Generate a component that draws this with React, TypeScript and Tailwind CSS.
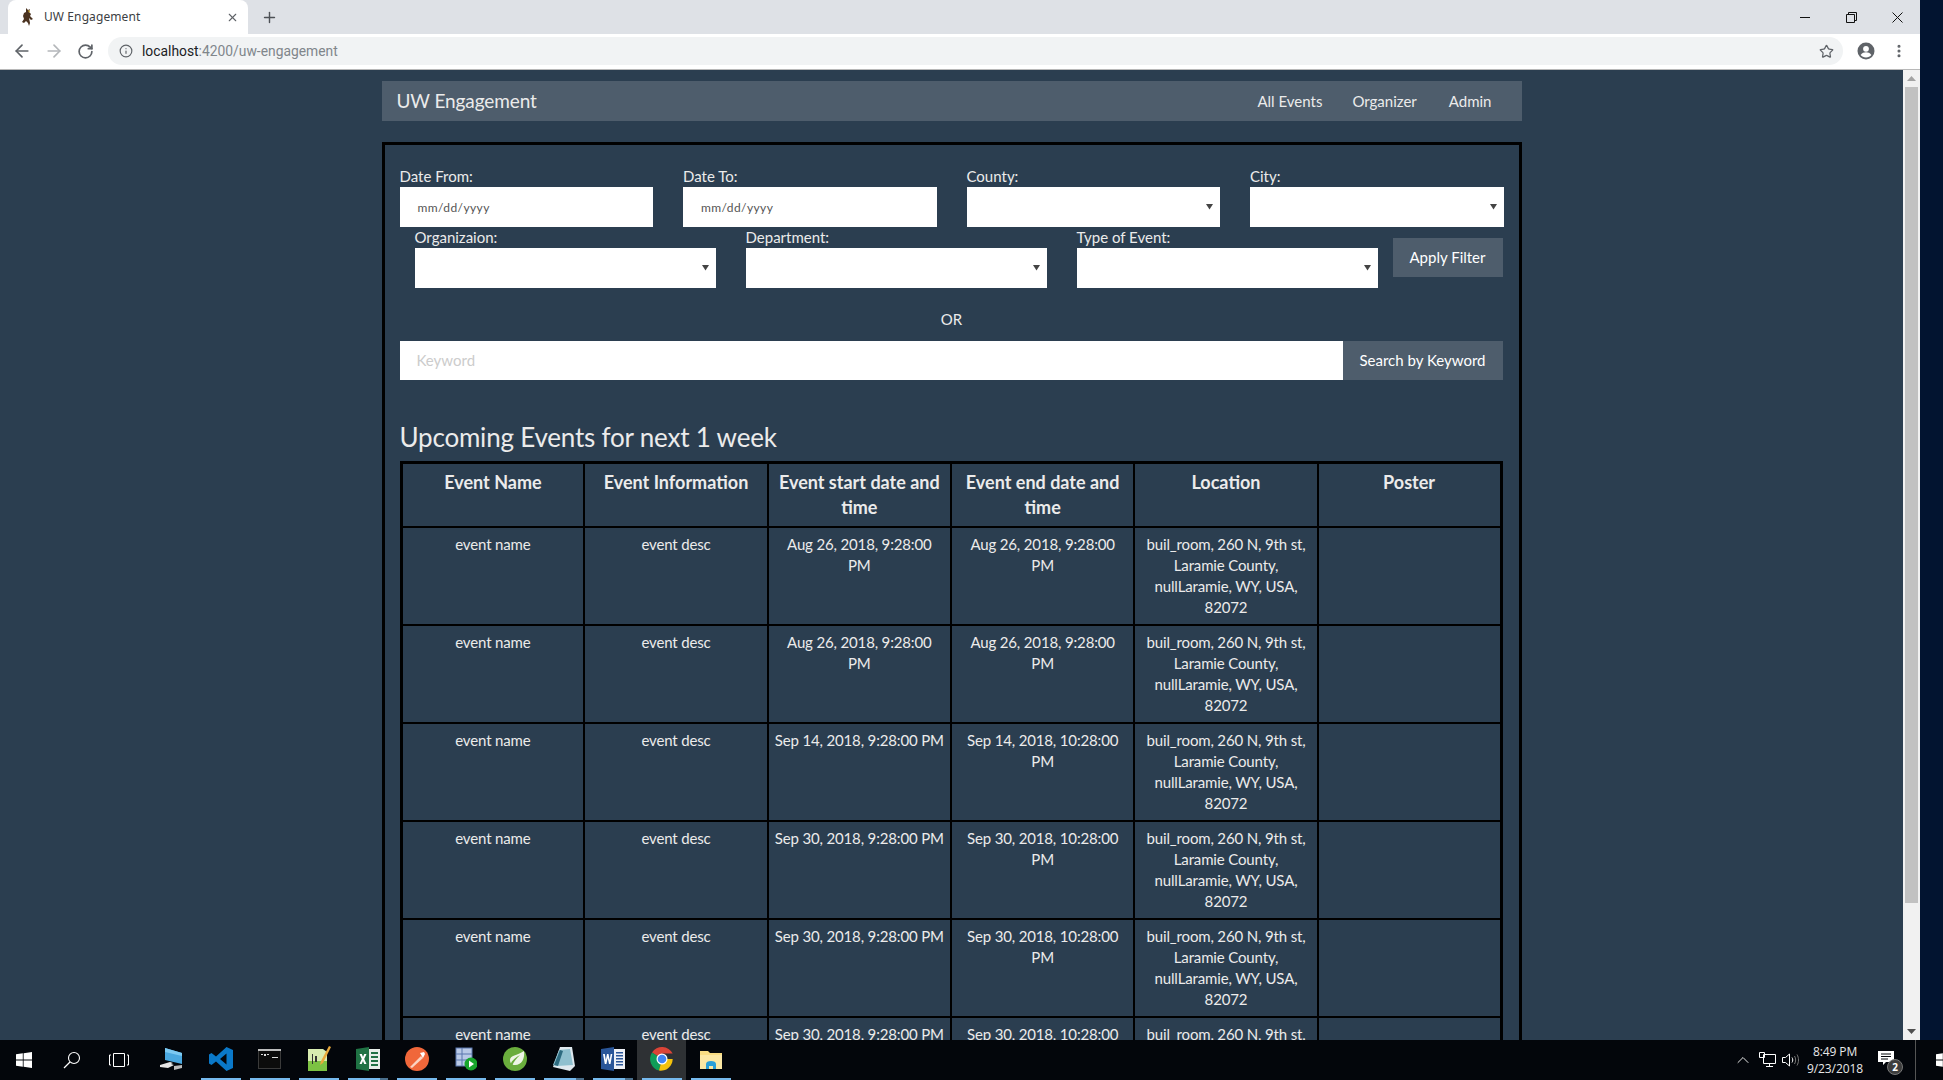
import React from 'react';
import { ArrowLeft, ArrowRight, RotateCw, Info, Star, MoreVertical, X, Plus, ChevronUp } from 'lucide-react';

const headers = ['Event Name', 'Event Information', 'Event start date and\ntime', 'Event end date and\ntime', 'Location', 'Poster'];

const location = 'buil_room, 260 N, 9th st,\nLaramie County,\nnullLaramie, WY, USA,\n82072';

const rows = [
  ['Aug 26, 2018, 9:28:00\nPM', 'Aug 26, 2018, 9:28:00\nPM'],
  ['Aug 26, 2018, 9:28:00\nPM', 'Aug 26, 2018, 9:28:00\nPM'],
  ['Sep 14, 2018, 9:28:00 PM', 'Sep 14, 2018, 10:28:00\nPM'],
  ['Sep 30, 2018, 9:28:00 PM', 'Sep 30, 2018, 10:28:00\nPM'],
  ['Sep 30, 2018, 9:28:00 PM', 'Sep 30, 2018, 10:28:00\nPM'],
  ['Sep 30, 2018, 9:28:00 PM', 'Sep 30, 2018, 10:28:00\nPM'],
];

const Caret = () => (
  <svg width="7" height="7" viewBox="0 0 7 7" className="shrink-0">
    <path d="M0 1h7L3.500 6.500z" fill="#444" />
  </svg>
);

const Field = ({ label, children }: { label: string; children: React.ReactNode }) => (
  <div className="flex-1 min-w-0">
    <div className="text-[15px] leading-[21px] text-[#ebebeb]">{label}</div>
    {children}
  </div>
);

const SelectBox = () => (
  <div className="h-10 bg-white flex items-center justify-end pr-[7px] pb-[2px]">
    <Caret />
  </div>
);

const DateBox = () => (
  <div className="h-10 bg-white flex items-center pl-[18px] pt-[2px] text-[12px] tracking-[0.4px] text-[#555]">mm/dd/yyyy</div>
);

const WyomingHorse = () => (
  <svg width="14" height="18" viewBox="0 0 14 18">
    <path d="M6 0l2 2 2-1-1 3 2 2-1 2 3 3-2 1-2-2 1 5-1 3-1-3-2-2-2 2-2-1 2-3-1-3 1-3 2-1z" fill="#4a3220" />
    <path d="M8 2l2 1-1 2z" fill="#c9a227" />
  </svg>
);

const ProfileIcon = () => (
  <svg width="18" height="18" viewBox="0 0 18 18">
    <circle cx="9" cy="9" r="8.500" fill="#5f6368" />
    <circle cx="9" cy="6.800" r="2.900" fill="#fff" />
    <path d="M3.600 13c1.300-2 3.400-2.700 5.400-2.700s4.100.7 5.400 2.700c-1.300 1.500-3.200 2.400-5.400 2.400S4.900 14.500 3.600 13z" fill="#fff" />
  </svg>
);

const BrowserChrome = () => (
  <>
    <div className="h-[34px] bg-[#dee1e6] flex items-end shrink-0">
      <div className="ml-2 w-[240px] h-[34px] bg-white rounded-t-[8px] flex items-center pl-[12px] pr-[9px]">
        <WyomingHorse />
        <span className="ml-[10px] text-[12px] text-[#3c4043] flex-1 tracking-[0.1px]">UW Engagement</span>
        <X size={13} strokeWidth={2} className="text-[#5f6368]" />
      </div>
      <div className="ml-[13px] h-[34px] flex items-center">
        <Plus size={17} strokeWidth={2} className="text-[#4d5156]" />
      </div>
      <div className="ml-auto h-[34px] flex items-center pr-[17px]">
        <svg width="11" height="11" viewBox="0 0 11 11" className="mr-[35px]">
          <path d="M0 5.500h10" stroke="#111" strokeWidth="1" />
        </svg>
        <svg width="11" height="11" viewBox="0 0 11 11" className="mr-[35px]">
          <path d="M.5 2.500h8v8h-8zM2.500 2.500V.5h8v8H8.500" fill="none" stroke="#111" strokeWidth="1" />
        </svg>
        <svg width="11" height="11" viewBox="0 0 11 11">
          <path d="M.5.5l10 10M10.500.5l-10 10" stroke="#111" strokeWidth="1" />
        </svg>
      </div>
    </div>
    <div className="h-[36px] bg-white border-b border-[#b8b8b8] flex items-center shrink-0 pb-px">
      <div className="w-[108px] flex items-center pl-[12px] shrink-0">
        <ArrowLeft size={20} strokeWidth={2} className="text-[#5f6368]" />
        <ArrowRight size={20} strokeWidth={2} className="ml-[12px] text-[#b4b7ba]" />
        <RotateCw size={17} strokeWidth={2.400} className="ml-[13px] text-[#5f6368]" />
      </div>
      <div className="w-[1735px] h-7 bg-[#f1f3f4] rounded-full flex items-center pl-[11px] pr-[9px] shrink-0">
        <Info size={14} strokeWidth={2} className="text-[#5f6368]" />
        <span className="ml-[9px] text-[13.850px] font-['Roboto',sans-serif] text-[#202124]">
          localhost<span className="text-[#80868b]">:4200/uw-engagement</span>
        </span>
        <Star size={15} strokeWidth={2} className="ml-auto text-[#5f6368]" />
      </div>
      <div className="flex-1 flex items-center pl-[14px]">
        <ProfileIcon />
        <MoreVertical size={16} strokeWidth={2.600} className="ml-[16px] text-[#5f6368]" />
      </div>
    </div>
  </>
);

const Scrollbar = () => (
  <div className="w-[17px] shrink-0 bg-[#f1f1f1] flex flex-col items-center">
    <div className="h-[17px] flex items-center justify-center shrink-0">
      <svg width="9" height="5" viewBox="0 0 9 5"><path d="M4.500 0L9 5H0z" fill="#a3a3a3" /></svg>
    </div>
    <div className="w-[13px] h-[816px] bg-[#c1c1c1] shrink-0" />
    <div className="mt-auto h-[17px] flex items-center justify-center shrink-0">
      <svg width="9" height="5" viewBox="0 0 9 5"><path d="M0 0h9L4.500 5z" fill="#505050" /></svg>
    </div>
  </div>
);

const FilterPanel = () => (
  <div>
    <div className="flex gap-[30px]">
      <Field label="Date From:"><DateBox /></Field>
      <Field label="Date To:"><DateBox /></Field>
      <Field label="County:"><SelectBox /></Field>
      <Field label="City:"><SelectBox /></Field>
    </div>
    <div className="flex">
      <div className="ml-[15px] w-[963px] flex gap-[30px]">
        <Field label="Organizaion:"><SelectBox /></Field>
        <Field label="Department:"><SelectBox /></Field>
        <Field label="Type of Event:"><SelectBox /></Field>
      </div>
      <button className="ml-[15px] mt-[11px] w-[110px] h-[39px] bg-[#4e5d6c] text-white text-[15px]">Apply Filter</button>
    </div>
    <div className="mt-[21px] text-center text-[15px] leading-[21px] text-[#ebebeb]">OR</div>
    <div className="mt-[11px] mr-px flex h-[39px]">
      <input
        placeholder="Keyword"
        className="flex-1 min-w-0 bg-white pl-[17px] text-[15px] text-[#333] placeholder:text-[#cccccc] outline-none"
      />
      <button className="w-[160px] bg-[#4e5d6c] text-white text-[15px]">Search by Keyword</button>
    </div>
  </div>
);

const EventsTable = () => (
  <table className="w-[1103px] table-fixed border-collapse border-[3px] border-black text-center text-[#ebebeb]">
    <thead>
      <tr>
        {headers.map((h) => (
          <th key={h} className="border-2 border-black px-[4px] py-[6px] text-[18px] leading-[25px] font-bold align-top whitespace-pre">
            {h}
          </th>
        ))}
      </tr>
    </thead>
    <tbody>
      {rows.map((r, i) => (
        <tr key={i}>
          {['event name', 'event desc', r[0], r[1], location, ''].map((c, j) => (
            <td key={j} className="border-2 border-black px-[4px] py-[6px] text-[15px] leading-[21px] tracking-[-0.15px] align-top whitespace-pre">
              {c}
            </td>
          ))}
        </tr>
      ))}
    </tbody>
  </table>
);

const Page = () => (
  <div className="flex-1 min-w-0 bg-[#2b3e50] overflow-hidden font-['Lato',sans-serif]">
    <div className="mx-auto w-[1140px] pt-[11px]">
      <nav className="h-10 bg-[#4e5d6c] flex items-center pl-[15px] text-[#ebebeb]">
        <span className="text-[19px] tracking-[-0.1px] pt-px">UW Engagement</span>
        <div className="ml-auto flex text-[15px] pr-[30px]">
          <span>All Events</span>
          <span className="ml-[30px]">Organizer</span>
          <span className="ml-[32px]">Admin</span>
        </div>
      </nav>
      <div className="mt-[21px] border-[3px] border-black px-[15px] pt-[21px]">
        <FilterPanel />
        <h3 className="mt-[43px] text-[26px] leading-[29px] tracking-[-0.2px] font-normal text-[#ebebeb]">Upcoming Events for next 1 week</h3>
        <div className="mt-[9px]">
          <EventsTable />
        </div>
      </div>
    </div>
  </div>
);

const WinLogo = ({ size = 16 }: { size?: number }) => (
  <svg width={size} height={size} viewBox="0 0 16 16" className="shrink-0">
    <path d="M0 2.300l6.800-1v6.300H0zM7.600 1.200L16 0v7.600H7.600zM0 8.400h6.800v6.300L0 13.700zM7.600 8.400H16V16l-8.400-1.200z" fill="#fff" />
  </svg>
);

const appIcons: { key: string; node: React.ReactNode; line?: 'full' | 'multi'; active?: boolean }[] = [
  {
    key: 'pc',
    node: (
      <svg width="26" height="26" viewBox="0 0 26 26">
        <path d="M6 2l17 5v11L6 14z" fill="#4aa8e0" />
        <path d="M6 2l17 5v3L6 6z" fill="#7cc9f2" />
        <path d="M1 19l10-3 3 1-2 1 3 1-6 3-8-1z" fill="#e6e6e6" />
        <path d="M15 20l8-1v3l-8 2z" fill="#bcbcbc" />
      </svg>
    ),
  },
  {
    key: 'vscode',
    line: 'full',
    node: (
      <svg width="24" height="24" viewBox="0 0 24 24">
        <path d="M17.500 0L24 3v18l-6.500 3L7 14.500 2.500 18 0 16.500V7.500L2.500 6 7 9.500zM17.500 6.500L11 12l6.500 5.500z" fill="#0a78c8" />
        <path d="M3 9.500V14.500L5.500 12z" fill="#0a78c8" />
      </svg>
    ),
  },
  {
    key: 'cmd',
    line: 'full',
    node: (
      <svg width="23" height="20" viewBox="0 0 23 20">
        <rect width="23" height="20" fill="#3a3a3a" />
        <rect width="23" height="2" fill="#bdbdbd" />
        <rect x="1" y="2" width="21" height="17" fill="#0c0c0c" />
        <path d="M3 5h2v1H3zM6 5h2v2H6zM9 5h2v1H9zM14 8h6v1h-6z" fill="#dcdcdc" />
      </svg>
    ),
  },
  {
    key: 'npp',
    line: 'full',
    node: (
      <svg width="24" height="26" viewBox="0 0 24 26">
        <path d="M1 3h15l4 3v19H1z" fill="#d8ecb0" />
        <path d="M1 15h19v10H1z" fill="#7cc243" />
        <path d="M5 8h1v10H5zM8 10h2v6H8z" fill="#333" />
        <path d="M22 0l2 1-8 16-3 2 1-4z" fill="#e8a93b" />
      </svg>
    ),
  },
  {
    key: 'excel',
    line: 'multi',
    node: (
      <svg width="24" height="24" viewBox="0 0 24 24">
        <path d="M9 2h15v20H9z" fill="#e7efe9" />
        <path d="M15 5h7v2h-7zM15 9h7v2h-7zM15 13h7v2h-7zM15 17h7v2h-7z" fill="#1f7244" />
        <path d="M0 2l13-2v24L0 22z" fill="#1f7244" />
        <path d="M3.500 7h2.300l1.200 3 1.300-3h2.200l-2.300 5 2.300 5H8.200L7 14l-1.300 3H3.500l2.300-5z" fill="#fff" />
      </svg>
    ),
  },
  {
    key: 'postman',
    line: 'full',
    node: (
      <svg width="24" height="24" viewBox="0 0 24 24">
        <circle cx="12" cy="12" r="12" fill="#f0673a" />
        <path d="M5 20l11-11 2 2L7 21z" fill="#fbd3c2" />
        <path d="M15 6l4-1 1 2-2 4z" fill="#fff" />
      </svg>
    ),
  },
  {
    key: 'media',
    line: 'full',
    node: (
      <svg width="22" height="24" viewBox="0 0 22 24">
        <rect x="1" y="1" width="16" height="18" fill="#b9c9e6" stroke="#5a76ad" />
        <path d="M1 7h16M1 13h16M7 1v18" stroke="#5a76ad" />
        <circle cx="16" cy="17" r="6.500" fill="#18a52c" />
        <path d="M14 13.500l5 3.500-5 3.500z" fill="#fff" />
      </svg>
    ),
  },
  {
    key: 'spring',
    line: 'full',
    node: (
      <svg width="24" height="24" viewBox="0 0 24 24">
        <circle cx="12" cy="12" r="12" fill="#6aad3d" />
        <path d="M21 4c1 7-2 14-9 14-3 0-5-2-5-5 0-5 7-4 14-9z" fill="#eef5e6" />
        <path d="M7 18c2-5 6-8 10-10-3 3-6 6-8 11z" fill="#6aad3d" />
      </svg>
    ),
  },
  {
    key: 'pad',
    line: 'multi',
    node: (
      <svg width="22" height="24" viewBox="0 0 22 24">
        <path d="M7 0h12l3 19-5 5-17-4z" fill="#dfe9ef" />
        <path d="M6 3l11-1 3 16-16 1-4-1z" fill="#8fc0cf" />
        <path d="M1 18L7 3l3 1-5 15z" fill="#2d6b80" />
      </svg>
    ),
  },
  {
    key: 'word',
    line: 'multi',
    node: (
      <svg width="24" height="24" viewBox="0 0 24 24">
        <path d="M9 2h15v20H9z" fill="#eef1f7" />
        <path d="M15 5h7v1.500h-7zM15 8h7v1.500h-7zM15 11h7v1.500h-7zM15 14h7v1.500h-7zM15 17h7v1.500h-7z" fill="#2a5699" />
        <path d="M0 2l13-2v24L0 22z" fill="#2a5699" />
        <path d="M2 7h1.800l1 6 1.200-6h1.500l1.200 6 1-6h1.600l-1.800 10H8L6.700 11l-1.300 6H3.800z" fill="#fff" />
      </svg>
    ),
  },
  {
    key: 'chrome',
    line: 'full',
    active: true,
    node: (
      <svg width="24" height="24" viewBox="0 0 24 24">
        <path d="M12 12L2 5.500A12 12 0 0 1 22.700 6.500H12z" fill="#db4437" />
        <path d="M12 12L2 5.500A12 12 0 0 0 9 23.600z" fill="#0f9d58" />
        <path d="M12 12h10.700A12 12 0 0 1 9 23.600z" fill="#f4c20d" />
        <circle cx="12" cy="12" r="5.500" fill="#fff" />
        <circle cx="12" cy="12" r="4.300" fill="#4285f4" />
      </svg>
    ),
  },
  {
    key: 'files',
    line: 'full',
    node: (
      <svg width="22" height="20" viewBox="0 0 22 20">
        <path d="M0 2h8l2 2h12v16H0z" fill="#f8dc83" />
        <path d="M0 6h22v14H0z" fill="#fbe7a4" />
        <path d="M6 15c0-2 2-3 5-3s5 1 5 3v5h-3v-3H9v3H6z" fill="#2a9fd8" />
      </svg>
    ),
  },
];

const Taskbar = () => (
  <div className="h-10 shrink-0 bg-[#03060b] flex items-stretch overflow-hidden">
    <div className="w-[48px] flex items-center justify-center">
      <WinLogo />
    </div>
    <div className="w-[48px] flex items-center justify-center">
      <svg width="18" height="18" viewBox="0 0 18 18">
        <circle cx="11" cy="7" r="5.500" fill="none" stroke="#fff" strokeWidth="1.100" />
        <path d="M7 11l-6 6" stroke="#fff" strokeWidth="1.300" />
      </svg>
    </div>
    <div className="w-[46px] mr-[5px] flex items-center justify-center">
      <svg width="20" height="16" viewBox="0 0 20 16">
        <path d="M4.500 1.500h11v13h-11zM2 3H.5v10H2M18 3h1.500v10H18" fill="none" stroke="#fff" strokeWidth="1" />
      </svg>
    </div>
    {appIcons.map((a) => (
      <div key={a.key} className={`w-[49px] flex flex-col items-center ${a.active ? 'bg-[#2e3134]' : ''}`}>
        <div className="flex-1 flex items-center justify-center">{a.node}</div>
        <div className="h-[2px] w-[40px] flex">
          {a.line === 'full' && <div className="flex-1 bg-[#76b9ed]" />}
          {a.line === 'multi' && (
            <>
              <div className="flex-1 bg-[#76b9ed]" />
              <div className="w-[8px] bg-[#4a6f8c]" />
            </>
          )}
        </div>
      </div>
    ))}
    <div className="ml-auto flex items-center text-[#e8e8e8]">
      <div className="w-[24px] flex justify-center">
        <ChevronUp size={20} strokeWidth={1.200} />
      </div>
      <div className="w-[24px] flex justify-center">
        <svg width="17" height="16" viewBox="0 0 17 16">
          <path d="M4.500 2.500h12v9h-12zM10.500 11.500v3M7 14.500h7M.5.5h5v5h-5z" fill="#03060b" stroke="#fff" strokeWidth="1" />
        </svg>
      </div>
      <div className="w-[22px] flex justify-center">
        <svg width="17" height="14" viewBox="0 0 17 14">
          <path d="M.5 4.500h3l4-3.500v12l-4-3.500h-3z" fill="none" stroke="#fff" />
          <path d="M10 4.500c1 1.500 1 3.500 0 5" fill="none" stroke="#fff" />
          <path d="M12.500 3c1.500 2.500 1.500 5.500 0 8M15 1.500c2 3.500 2 7.500 0 11" fill="none" stroke="#777" />
        </svg>
      </div>
      <div className="w-[68px] text-center text-[12px] leading-[17px] tracking-[-0.1px] font-['Open_Sans',sans-serif]">
        <div>8:49 PM</div>
        <div>9/23/2018</div>
      </div>
      <div className="w-[36px] flex justify-center relative h-full items-center">
        <svg width="16" height="15" viewBox="0 0 16 15" className="-translate-x-[1px] -translate-y-[2px]">
          <path d="M0 0h16v11H8l-3 3v-3H0z" fill="#fff" />
          <path d="M3 3h10M3 5.500h10M3 8h7" stroke="#03060b" strokeWidth="1" />
        </svg>
        <span className="absolute left-[18px] top-[19px] w-[16px] h-[16px] rounded-full bg-[#3d3d3d] border border-[#777] flex items-center justify-center text-[10px] font-bold text-white font-['Open_Sans',sans-serif]">
          2
        </span>
      </div>
      <div className="w-[10px]" />
      <div className="w-px h-full bg-[#555]" />
      <div className="w-[20px]" />
      <div className="w-[7px] overflow-hidden">
        <WinLogo />
      </div>
    </div>
  </div>
);

export default function App() {
  return (
    <div className="h-screen w-full flex flex-col overflow-hidden">
      <div className="flex-1 min-h-0 flex">
        <div className="w-[1920px] shrink-0 flex flex-col">
          <BrowserChrome />
          <div className="flex-1 min-h-0 flex">
            <Page />
            <Scrollbar />
          </div>
        </div>
        <div className="flex-1 bg-[#021430]" />
      </div>
      <Taskbar />
    </div>
  );
}
